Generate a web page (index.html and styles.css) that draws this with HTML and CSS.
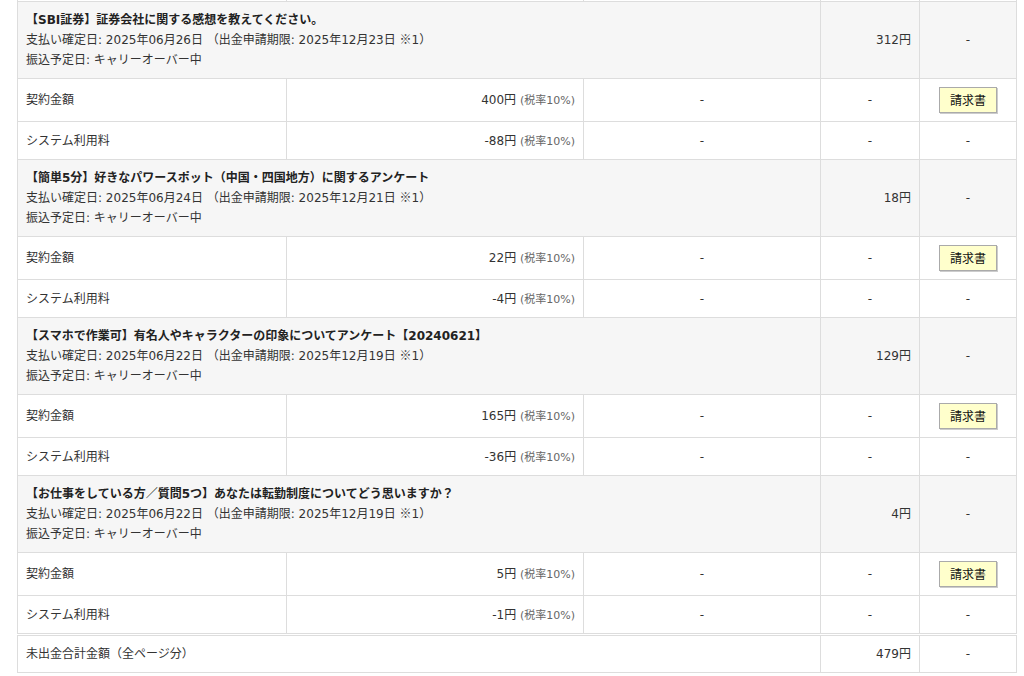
FILE: index.html
```html
<!DOCTYPE html>
<html lang="ja">
<head>
<meta charset="utf-8">
<link rel="stylesheet" href="styles.css">
</head>
<body>
<div class="wrap">
<table class="list">
  <colgroup>
    <col class="c1"><col class="c2"><col class="c3"><col class="c4"><col class="c5">
  </colgroup>
  <tr class="prev">
    <td></td><td></td><td></td><td></td><td></td>
  </tr>

  <tr class="head">
    <td colspan="3"><b>【SBI証券】証券会社に関する感想を教えてください。</b><br>支払い確定日: 2025年06月26日 （出金申請期限: 2025年12月23日 <span class="cjk">※</span>1）<br>振込予定日: キャリーオーバー中</td>
    <td class="num">312円</td><td class="ctr">-</td>
  </tr>
  <tr class="btnrow">
    <td>契約金額</td><td class="num">400円 <span class="tax">(税率10%)</span></td><td class="ctr">-</td><td class="ctr">-</td><td class="ctr"><button class="inv">請求書</button></td>
  </tr>
  <tr class="plain">
    <td>システム利用料</td><td class="num">-88円 <span class="tax">(税率10%)</span></td><td class="ctr">-</td><td class="ctr">-</td><td class="ctr">-</td>
  </tr>

  <tr class="head">
    <td colspan="3"><b>【簡単5分】好きなパワースポット（中国・四国地方）に関するアンケート</b><br>支払い確定日: 2025年06月24日 （出金申請期限: 2025年12月21日 <span class="cjk">※</span>1）<br>振込予定日: キャリーオーバー中</td>
    <td class="num">18円</td><td class="ctr">-</td>
  </tr>
  <tr class="btnrow">
    <td>契約金額</td><td class="num">22円 <span class="tax">(税率10%)</span></td><td class="ctr">-</td><td class="ctr">-</td><td class="ctr"><button class="inv">請求書</button></td>
  </tr>
  <tr class="plain">
    <td>システム利用料</td><td class="num">-4円 <span class="tax">(税率10%)</span></td><td class="ctr">-</td><td class="ctr">-</td><td class="ctr">-</td>
  </tr>

  <tr class="head">
    <td colspan="3"><b>【スマホで作業可】有名人やキャラクターの印象についてアンケート【20240621】</b><br>支払い確定日: 2025年06月22日 （出金申請期限: 2025年12月19日 <span class="cjk">※</span>1）<br>振込予定日: キャリーオーバー中</td>
    <td class="num">129円</td><td class="ctr">-</td>
  </tr>
  <tr class="btnrow">
    <td>契約金額</td><td class="num">165円 <span class="tax">(税率10%)</span></td><td class="ctr">-</td><td class="ctr">-</td><td class="ctr"><button class="inv">請求書</button></td>
  </tr>
  <tr class="plain">
    <td>システム利用料</td><td class="num">-36円 <span class="tax">(税率10%)</span></td><td class="ctr">-</td><td class="ctr">-</td><td class="ctr">-</td>
  </tr>

  <tr class="head">
    <td colspan="3"><b>【お仕事をしている方／質問5つ】あなたは転勤制度についてどう思いますか？</b><br>支払い確定日: 2025年06月22日 （出金申請期限: 2025年12月19日 <span class="cjk">※</span>1）<br>振込予定日: キャリーオーバー中</td>
    <td class="num">4円</td><td class="ctr">-</td>
  </tr>
  <tr class="btnrow">
    <td>契約金額</td><td class="num">5円 <span class="tax">(税率10%)</span></td><td class="ctr">-</td><td class="ctr">-</td><td class="ctr"><button class="inv">請求書</button></td>
  </tr>
  <tr class="plain">
    <td>システム利用料</td><td class="num">-1円 <span class="tax">(税率10%)</span></td><td class="ctr">-</td><td class="ctr">-</td><td class="ctr">-</td>
  </tr>
</table>

<table class="list total">
  <colgroup>
    <col class="t1"><col class="c4"><col class="c5">
  </colgroup>
  <tr class="sum">
    <td>未出金合計金額（全ページ分）</td><td class="num">479円</td><td class="ctr">-</td>
  </tr>
</table>
</div>
</body>
</html>
```

FILE: styles.css
```css
html, body {
  margin: 0;
  padding: 0;
  background: #fff;
}
body {
  font-family: "DejaVu Sans", "Noto Sans CJK JP", sans-serif;
  font-size: 12px;
  color: #333;
  overflow: hidden;
}
.wrap {
  padding-left: 17px;
  margin-top: -37px;
}
.list {
  border-collapse: collapse;
  table-layout: fixed;
  width: 1000px;
}
.list td {
  border: 1px solid #ddd;
  padding: 8px 8px;
  line-height: 20px;
  vertical-align: middle;
}
.c1 { width: 269px; }
.c2 { width: 297px; }
.c3 { width: 237px; }
.c4 { width: 99px; }
.c5 { width: 97px; }
.t1 { width: 803px; }
.prev td {
  height: 20px;
  padding-top: 9px;
  padding-bottom: 8px;
}
.head td {
  background: #f6f6f6;
}
.head b {
  font-weight: bold;
  color: #222;
}
.cjk {
  font-family: "Noto Sans CJK JP", sans-serif;
  line-height: 1;
}
.plain td {
  padding-top: 9px;
  padding-bottom: 8px;
}
.btnrow td {
  height: 26px;
  padding-top: 8px;
  padding-bottom: 8px;
}
.sum td {
  padding-top: 8px;
  padding-bottom: 8px;
}
.num {
  text-align: right;
}
.ctr {
  text-align: center;
}
.tax {
  font-size: 11px;
  color: #666;
  line-height: 1;
}
.inv {
  font-family: "Noto Sans CJK JP", sans-serif;
  font-size: 12px;
  color: #111;
  background: #ffffcc;
  border: 1px solid #aaa;
  box-shadow: 1px 1px 0 #ccc;
  width: 58px;
  height: 26px;
  padding: 0;
  line-height: 24px;
  display: block;
  margin: 0 auto;
}
.total {
  margin-top: 1px;
}
```
